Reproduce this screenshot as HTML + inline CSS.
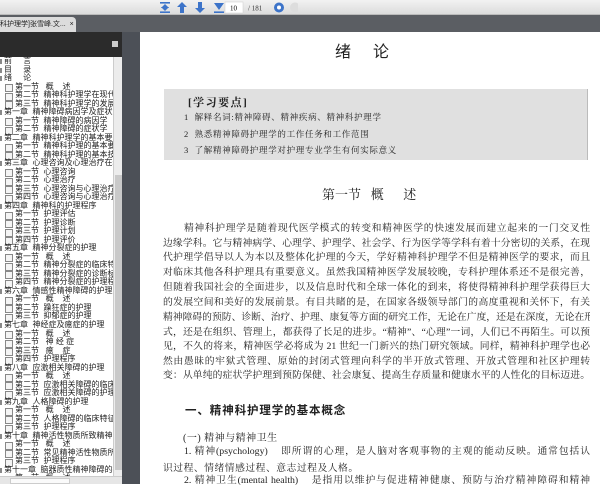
<!DOCTYPE html>
<html><head><meta charset="utf-8"><style>
*{margin:0;padding:0;box-sizing:border-box}
body{width:600px;height:484px;overflow:hidden;position:relative;background:#fff;font-family:"Liberation Serif","Noto Serif CJK SC",serif;color:#222}
.abs{position:absolute}
#tb{left:0;top:0;width:600px;height:15px;background:linear-gradient(#f2f2f2,#dcdcdc);border-bottom:1px solid #bbb}
#tabs{left:0;top:15px;width:600px;height:17px;background:#5b5e63}
#tab{left:0;top:17px;width:76px;height:15px;background:#dcdcdc;font:7px "Liberation Sans","Noto Sans CJK SC",sans-serif;line-height:15px;white-space:nowrap;overflow:hidden;border-radius:0 4px 0 0}
#lh{left:0;top:32px;width:122px;height:25px;background:#2b2b2b}
#tree{left:0;top:57px;width:113px;height:419px;background:#fff;overflow:hidden;font:8px "Liberation Sans","Noto Sans CJK SC",sans-serif;color:#222}
.r{height:8.52px;line-height:8.52px;white-space:nowrap;position:relative}
.c{padding-left:4px}
.c:before{content:"";position:absolute;left:0;top:2px;width:2px;height:5px;background:#888}
.s{padding-left:15px}
.s:before{content:"";position:absolute;left:5px;top:1.5px;width:6px;height:6px;border:1px solid #888;background:#f4f4f4}
#vs{left:113px;top:57px;width:9px;height:419px;background:#ececec;border-left:1px solid #ccc}
#hs{left:0;top:476px;width:122px;height:8px;background:#e6e6e6;border-top:1px solid #ccc}
#gut{left:122px;top:32px;width:18px;height:452px;background:#4c5057}
#page{left:140px;top:32px;width:460px;height:452px;background:#fff}
.ln{position:absolute;left:163px;width:427px;font-size:9.8px;line-height:14px;text-align:justify;text-align-last:justify;white-space:nowrap;overflow:hidden}
</style></head><body>
<div id="tb" class="abs">
<svg class="abs" style="left:158px;top:1px" width="140" height="13">
<g fill="#3d74c9"><rect x="2" y="1" width="10" height="1.6"/><rect x="2" y="10.4" width="10" height="1.6"/><polygon points="7,3 11,7 3,7"/><polygon points="7,10 11,6 3,6"/>
<polygon points="24,1 29,6 26,6 26,12 22,12 22,6 19,6"/>
<polygon points="42,12 47,7 44,7 44,1 40,1 40,7 37,7"/>
<rect x="56" y="10.4" width="10" height="1.6"/><polygon points="56,2 66,2 61,9"/></g>
<rect x="67" y="1" width="18" height="11" fill="#fff" stroke="#ccc" stroke-width="0.5"/>
<text x="72" y="9.5" font-size="7" font-family="Liberation Serif">10</text>
<text x="90" y="9.5" font-size="7" font-family="Liberation Serif" fill="#333">/ 181</text>
<circle cx="121" cy="6.5" r="5" fill="#3d74c9"/><circle cx="121" cy="6.5" r="2" fill="#fff"/>
<circle cx="137" cy="6.5" r="5" fill="#ddd"/>
</svg></div>
<div id="tabs" class="abs"></div>
<div id="tab" class="abs">科护理学]张雪峰.文... &nbsp;×</div>
<div id="lh" class="abs"><div class="abs" style="left:112px;top:9px;width:6px;height:6px;background:#ccc"></div></div>
<div id="tree" class="abs">
<div class="r c">前&nbsp;&nbsp;&nbsp;&nbsp;&nbsp;言</div><div class="r c">目&nbsp;&nbsp;&nbsp;&nbsp;&nbsp;录</div><div class="r c">绪&nbsp;&nbsp;&nbsp;&nbsp;&nbsp;论</div>
<div class="r s">第一节&nbsp;&nbsp;&nbsp;概&nbsp;&nbsp;&nbsp;&nbsp;述</div><div class="r s">第二节&nbsp;&nbsp;精神科护理学在现代医</div><div class="r s">第三节&nbsp;&nbsp;精神科护理学的发展前</div>
<div class="r c">第一章&nbsp;&nbsp;精神障碍病因学及症状</div><div class="r s">第一节&nbsp;&nbsp;精神障碍的病因学</div><div class="r s">第二节&nbsp;&nbsp;精神障碍的症状学</div>
<div class="r c">第二章&nbsp;&nbsp;精神科护理学的基本要求</div><div class="r s">第一节&nbsp;&nbsp;精神科护理的基本要求</div><div class="r s">第二节&nbsp;&nbsp;精神科护理的基本技能</div>
<div class="r c">第三章&nbsp;&nbsp;心理咨询及心理治疗在精</div><div class="r s">第一节&nbsp;&nbsp;心理咨询</div><div class="r s">第二节&nbsp;&nbsp;心理治疗</div><div class="r s">第三节&nbsp;&nbsp;心理咨询与心理治疗的</div><div class="r s">第四节&nbsp;&nbsp;心理咨询与心理治疗的</div>
<div class="r c">第四章&nbsp;&nbsp;精神科的护理程序</div><div class="r s">第一节&nbsp;&nbsp;护理评估</div><div class="r s">第二节&nbsp;&nbsp;护理诊断</div><div class="r s">第三节&nbsp;&nbsp;护理计划</div><div class="r s">第四节&nbsp;&nbsp;护理评价</div>
<div class="r c">第五章&nbsp;&nbsp;精神分裂症的护理</div><div class="r s">第一节&nbsp;&nbsp;&nbsp;概&nbsp;&nbsp;&nbsp;&nbsp;述</div><div class="r s">第二节&nbsp;&nbsp;精神分裂症的临床特征</div><div class="r s">第三节&nbsp;&nbsp;精神分裂症的诊断标准</div><div class="r s">第四节&nbsp;&nbsp;精神分裂症的护理程序</div>
<div class="r c">第六章&nbsp;&nbsp;情感性精神障碍的护理</div><div class="r s">第一节&nbsp;&nbsp;&nbsp;概&nbsp;&nbsp;&nbsp;&nbsp;述</div><div class="r s">第二节&nbsp;&nbsp;躁狂症的护理</div><div class="r s">第三节&nbsp;&nbsp;抑郁症的护理</div>
<div class="r c">第七章&nbsp;&nbsp;神经症及癔症的护理</div><div class="r s">第一节&nbsp;&nbsp;&nbsp;概&nbsp;&nbsp;&nbsp;&nbsp;述</div><div class="r s">第二节&nbsp;&nbsp;&nbsp;神&nbsp;经&nbsp;症</div><div class="r s">第三节&nbsp;&nbsp;&nbsp;癔&nbsp;&nbsp;&nbsp;&nbsp;症</div><div class="r s">第四节&nbsp;&nbsp;护理程序</div>
<div class="r c">第八章&nbsp;&nbsp;应激相关障碍的护理</div><div class="r s">第一节&nbsp;&nbsp;&nbsp;概&nbsp;&nbsp;&nbsp;&nbsp;述</div><div class="r s">第二节&nbsp;&nbsp;应激相关障碍的临床特</div><div class="r s">第三节&nbsp;&nbsp;应激相关障碍的护理程</div>
<div class="r c">第九章&nbsp;&nbsp;人格障碍的护理</div><div class="r s">第一节&nbsp;&nbsp;&nbsp;概&nbsp;&nbsp;&nbsp;&nbsp;述</div><div class="r s">第二节&nbsp;&nbsp;人格障碍的临床特征</div><div class="r s">第三节&nbsp;&nbsp;护理程序</div>
<div class="r c">第十章&nbsp;&nbsp;精神活性物质所致精神障碍</div><div class="r s">第一节&nbsp;&nbsp;&nbsp;概&nbsp;&nbsp;&nbsp;&nbsp;述</div><div class="r s">第二节&nbsp;&nbsp;常见精神活性物质所致</div><div class="r s">第三节&nbsp;&nbsp;护理程序</div>
<div class="r c">第十一章&nbsp;&nbsp;脑器质性精神障碍的护理</div><div class="r s">第一节&nbsp;&nbsp;&nbsp;概&nbsp;&nbsp;&nbsp;&nbsp;述</div>
</div>
<div id="vs" class="abs"><div class="abs" style="left:1px;top:118px;width:7px;height:295px;background:#c9c9c9"></div></div>
<div id="hs" class="abs"><div class="abs" style="left:10px;top:1px;width:60px;height:6px;background:#fafafa;border:1px solid #ccc"></div></div>
<div id="gut" class="abs"></div>
<div id="page" class="abs"></div>
<div class="abs" style="left:335px;top:38px;font-size:16px;letter-spacing:22px;font-family:'Liberation Serif','Noto Sans CJK SC',serif">绪论</div>
<div class="abs" style="left:164px;top:89px;width:424px;height:71px;background:#e0e0e0;border-right:1px solid #bbb"></div>
<div class="abs" style="left:188px;top:94px;font-size:11px;letter-spacing:1.5px;font-weight:bold">[学习要点]</div>
<div class="abs" style="left:184px;top:111px;font-size:8.5px;letter-spacing:0.7px">1&nbsp;&nbsp;解释名词:精神障碍、精神疾病、精神科护理学</div>
<div class="abs" style="left:184px;top:128px;font-size:8.5px;letter-spacing:0.7px">2&nbsp;&nbsp;熟悉精神障碍护理学的工作任务和工作范围</div>
<div class="abs" style="left:184px;top:144px;font-size:8.5px;letter-spacing:0.7px">3&nbsp;&nbsp;了解精神障碍护理学对护理专业学生有何实际意义</div>
<div class="abs" style="left:322px;top:184px;font-size:13px">第一节&nbsp;&nbsp;&nbsp;概&nbsp;&nbsp;&nbsp;&nbsp;&nbsp;&nbsp;述</div>
<div class="ln" style="top:222px;left:184px;width:406px">精神科护理学是随着现代医学模式的转变和精神医学的快速发展而建立起来的一门交叉性</div>
<div class="ln" style="top:237px">边缘学科。它与精神病学、心理学、护理学、社会学、行为医学等学科有着十分密切的关系，在现</div>
<div class="ln" style="top:251px">代护理学倡导以人为本以及整体化护理的今天，学好精神科护理学不但是精神医学的要求，而且</div>
<div class="ln" style="top:266px">对临床其他各科护理具有重要意义。虽然我国精神医学发展较晚，专科护理体系还不是很完善，</div>
<div class="ln" style="top:281px">但随着我国社会的全面进步，以及信息时代和全球一体化的到来，将使得精神科护理学获得巨大</div>
<div class="ln" style="top:296px">的发展空间和美好的发展前景。有目共睹的是，在国家各级领导部门的高度重视和关怀下，有关</div>
<div class="ln" style="top:311px">精神障碍的预防、诊断、治疗、护理、康复等方面的研究工作，无论在广度，还是在深度，无论在形</div>
<div class="ln" style="top:326px">式，还是在组织、管理上，都获得了长足的进步。“精神”、“心理”一词，人们已不再陌生。可以预</div>
<div class="ln" style="top:340px">见，不久的将来，精神医学必将成为 21 世纪一门新兴的热门研究领域。同样，精神科护理学也必</div>
<div class="ln" style="top:355px">然由愚昧的牢狱式管理、原始的封闭式管理向科学的半开放式管理、开放式管理和社区护理转</div>
<div class="ln" style="top:369px">变：从单纯的症状学护理到预防保健、社会康复、提高生存质量和健康水平的人性化的目标迈进。</div>
<div class="abs" style="left:185px;top:402px;font-size:11.5px;font-weight:bold;letter-spacing:0.9px;font-family:'Liberation Sans','Noto Sans CJK SC',sans-serif">一、精神科护理学的基本概念</div>
<div class="abs" style="left:183px;top:429px;font-size:10px;letter-spacing:0.5px">(一) 精神与精神卫生</div>
<div class="ln" style="top:445px;left:184px;width:406px">1. 精神(psychology)&nbsp;&nbsp;&nbsp;&nbsp;即所谓的心理，是人脑对客观事物的主观的能动反映。通常包括认</div>
<div class="abs" style="left:163px;top:460px;font-size:9.8px;letter-spacing:0.5px">识过程、情绪情感过程、意志过程及人格。</div>
<div class="ln" style="top:474px;left:184px;width:406px">2. 精神卫生(mental health)&nbsp;&nbsp;&nbsp;&nbsp;是指用以维护与促进精神健康、预防与治疗精神障碍和精神</div>
</body></html>
